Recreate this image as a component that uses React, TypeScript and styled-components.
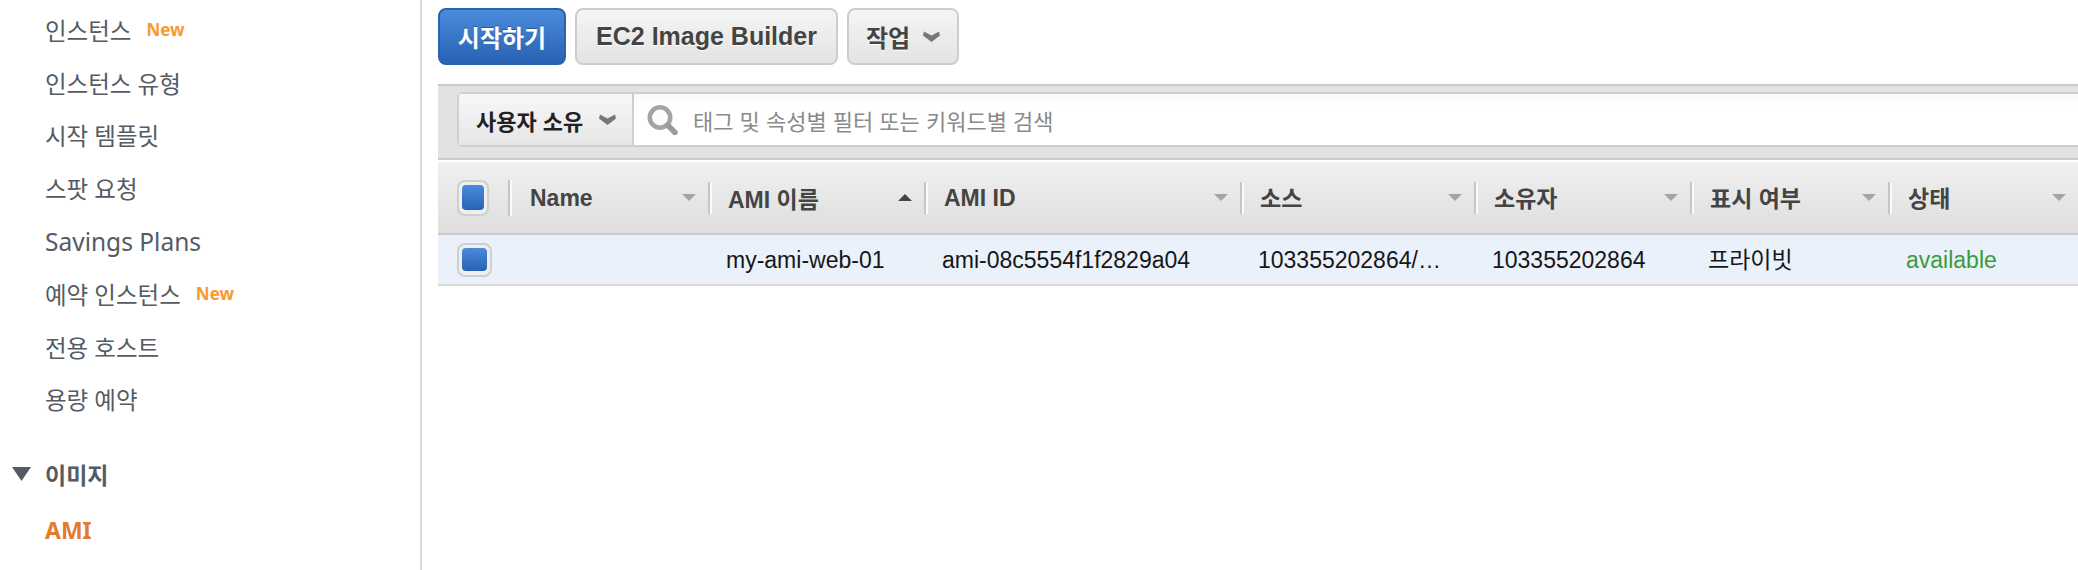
import React from 'react';
import styled, { createGlobalStyle } from 'styled-components';

const COLUMNS = '70px 200px 216px 316px 234px 216px 198px 190px';
const UI_FONT = '"Liberation Sans", "Noto Sans CJK KR", sans-serif';
const NAV_FONT = '"Noto Sans", "Noto Sans CJK KR", sans-serif';

type Script = 'latin' | 'mixed' | 'cjk';

// Noto CJK sits lower in the line than Liberation, nudge each so they share a baseline
const nudge = (s: Script) =>
  s === 'latin' ? 'padding-top: 2px;' : s === 'cjk' ? 'padding-bottom: 2px;' : '';

const GlobalStyle = createGlobalStyle`
  html, body {
    margin: 0;
    padding: 0;
    background: #fff;
  }
`;

const Page = styled.div`
  display: flex;
  width: 2078px;
  height: 570px;
  overflow: hidden;
  font-family: ${UI_FONT};
`;

const Sidebar = styled.nav`
  flex: 0 0 420px;
  padding-top: 3.5px;
  border-right: 2px solid #d5d9dc;
  font-family: ${NAV_FONT};
`;

const NavItem = styled.div<{ $latin?: boolean }>`
  display: flex;
  align-items: center;
  height: 52.8px;
  padding-left: 45px;
  font-size: ${p => (p.$latin ? 24.5 : 23.5)}px;
  color: #545b64;
`;

const NewTag = styled.span`
  margin-left: 15px;
  font-size: 17px;
  font-weight: 700;
  color: #f7992f;
`;

const SectionTitle = styled.div`
  display: flex;
  align-items: center;
  height: 52px;
  margin-top: 22.5px;
  padding-left: 12px;
  font-size: 23px;
  font-weight: 700;
  color: #545b64;
  svg {
    margin-right: 14px;
  }
`;

const ActiveItem = styled.div`
  display: flex;
  align-items: center;
  height: 52px;
  margin-top: 4px;
  padding-left: 45px;
  font-size: 23px;
  font-weight: 700;
  color: #e27b2f;
`;

const Main = styled.main`
  flex: 1;
  min-width: 0;
  padding-left: 16px;
`;

const Toolbar = styled.div`
  display: flex;
  gap: 9px;
  padding-top: 8px;
  height: 57px;
`;

const Button = styled.button<{ $primary?: boolean; $latin?: boolean; $width: number }>`
  display: flex;
  align-items: center;
  justify-content: center;
  gap: 13px;
  box-sizing: border-box;
  width: ${p => p.$width}px;
  height: 57px;
  padding: 0;
  border-radius: 8px;
  border: 2px solid ${p => (p.$primary ? '#2c62ad' : '#cdcdcd')};
  background: ${p =>
    p.$primary
      ? 'linear-gradient(#4b8bdb, #2862b5)'
      : 'linear-gradient(#f5f5f5, #e3e3e3)'};
  color: ${p => (p.$primary ? '#fff' : '#444')};
  font-family: ${UI_FONT};
  font-size: ${p => (p.$latin ? 25 : 24)}px;
  font-weight: 700;
  text-shadow: ${p => (p.$primary ? '0 -1px 0 rgba(0,0,0,.3)' : '0 1px 0 #fff')};
`;

const FilterPanel = styled.div`
  margin-top: 19px;
  box-sizing: border-box;
  height: 76px;
  padding: 6px 0 0 19px;
  background: #e2e2e2;
  border-top: 2px solid #cbcbcb;
  border-bottom: 2px solid #cbcbcb;
`;

const FilterControl = styled.div`
  display: flex;
  box-sizing: border-box;
  height: 55px;
  border: 2px solid #cfcfcf;
  border-right: 0;
  border-radius: 6px 0 0 6px;
  background: linear-gradient(#f9f9f9 0, #fff 12px);
`;

const OwnerSelect = styled.div`
  display: flex;
  align-items: center;
  box-sizing: border-box;
  flex: 0 0 175px;
  padding-left: 17px;
  gap: 16px;
  border-right: 2px solid #cfcfcf;
  background: linear-gradient(#f7f7f7, #e6e6e6);
  font-size: 22px;
  font-weight: 700;
  color: #222;
`;

const SearchBox = styled.div`
  display: flex;
  align-items: center;
  padding-left: 13px;
  gap: 15px;
  font-size: 22px;
  color: #8a8a8a;
`;

const Row = styled.div`
  display: grid;
  grid-template-columns: ${COLUMNS};
`;

const HeaderRow = styled(Row)`
  box-sizing: border-box;
  margin-top: 2px;
  height: 73px;
  background: linear-gradient(#f0f0f0, #dedede);
  border-bottom: 2px solid #c9c9c9;
`;

const BodyRow = styled(Row)`
  box-sizing: border-box;
  height: 51px;
  background: #eaf1fb;
  border-bottom: 2px solid #dcdcdc;
`;

const CheckCell = styled.div`
  display: flex;
  align-items: center;
  padding-left: 19px;
`;

const Check = styled.span<{ $w: number; $h: number }>`
  display: flex;
  align-items: center;
  justify-content: center;
  box-sizing: border-box;
  width: ${p => p.$w}px;
  height: ${p => p.$h}px;
  border: 2px solid #cfcfcf;
  border-radius: 8px;
  background: #efefef;
  &::after {
    content: '';
    width: ${p => p.$w - 10}px;
    height: ${p => p.$h - 11}px;
    border-radius: 4px;
    background: linear-gradient(#4b8bdb, #2762b6);
  }
`;

const HeadCell = styled.div`
  display: flex;
  align-items: center;
  min-width: 0;
  font-size: 23px;
  font-weight: 700;
  color: #444;
`;

const Divider = styled.span<{ $tall?: boolean }>`
  flex: none;
  width: 2px;
  height: ${p => (p.$tall ? 36 : 32)}px;
  background: #c6c6c6;
  border-right: 2px solid #fafafa;
`;

const HeadLabel = styled.span<{ $inset: number; $script: Script }>`
  flex: 1;
  padding-left: ${p => p.$inset}px;
  white-space: nowrap;
  ${p => nudge(p.$script)}
`;

const SortArrow = styled.span<{ $up?: boolean }>`
  flex: none;
  width: 0;
  height: 0;
  margin-right: 12px;
  border-left: 7px solid transparent;
  border-right: 7px solid transparent;
  ${p =>
    p.$up
      ? 'border-bottom: 7px solid #444;'
      : 'border-top: 7px solid #a5a5a5;'}
`;

const Cell = styled.div<{ $status?: boolean; $script: Script }>`
  display: flex;
  align-items: center;
  padding-left: 18px;
  font-size: 23px;
  color: ${p => (p.$status ? '#3c9a3c' : '#161616')};
  white-space: nowrap;
  ${p => (p.$script === 'cjk' ? 'padding-bottom: 4px;' : nudge(p.$script))}
`;

const Chevron: React.FC = () => (
  <svg width="17" height="11" viewBox="0 0 17 11" aria-hidden="true">
    <path d="M1 .5 L8.5 4.5 L16 .5 L17 4.5 L8.5 11 L0 4.5 Z" fill="#787878" />
  </svg>
);

const SearchIcon: React.FC = () => (
  <svg width="31" height="30" viewBox="0 0 31 30" aria-hidden="true">
    <circle cx="13" cy="12.5" r="10.2" fill="#fcfcfc" stroke="#a4a4a4" strokeWidth="4.6" />
    <path d="M21 20.5 L28 27.5" stroke="#9a9a9a" strokeWidth="5.5" strokeLinecap="round" />
  </svg>
);

const CollapseIcon: React.FC = () => (
  <svg width="19" height="14" viewBox="0 0 19 14" aria-hidden="true">
    <path d="M0 0 H19 L9.5 14 Z" fill="#545b64" />
  </svg>
);

const navItems: { label: string; isNew?: boolean; latin?: boolean }[] = [
  { label: '인스턴스', isNew: true },
  { label: '인스턴스 유형' },
  { label: '시작 템플릿' },
  { label: '스팟 요청' },
  { label: 'Savings Plans', latin: true },
  { label: '예약 인스턴스', isNew: true },
  { label: '전용 호스트' },
  { label: '용량 예약' },
];

const headers: { label: string; script: Script }[] = [
  { label: 'Name', script: 'latin' },
  { label: 'AMI 이름', script: 'mixed' },
  { label: 'AMI ID', script: 'latin' },
  { label: '소스', script: 'cjk' },
  { label: '소유자', script: 'cjk' },
  { label: '표시 여부', script: 'cjk' },
  { label: '상태', script: 'cjk' },
];

const cells: { text: string; script: Script }[] = [
  { text: '', script: 'latin' },
  { text: 'my-ami-web-01', script: 'latin' },
  { text: 'ami-08c5554f1f2829a04', script: 'latin' },
  { text: '103355202864/…', script: 'latin' },
  { text: '103355202864', script: 'latin' },
  { text: '프라이빗', script: 'cjk' },
];

const App: React.FC = () => (
  <Page>
    <GlobalStyle />
    <Sidebar>
      {navItems.map(item => (
        <NavItem key={item.label} $latin={item.latin}>
          {item.label}
          {item.isNew && <NewTag>New</NewTag>}
        </NavItem>
      ))}
      <SectionTitle>
        <CollapseIcon />
        이미지
      </SectionTitle>
      <ActiveItem>AMI</ActiveItem>
    </Sidebar>
    <Main>
      <Toolbar>
        <Button $primary $width={128}>시작하기</Button>
        <Button $latin $width={263}>EC2 Image Builder</Button>
        <Button $width={112}>작업<Chevron /></Button>
      </Toolbar>
      <FilterPanel>
        <FilterControl>
          <OwnerSelect>
            사용자 소유 <Chevron />
          </OwnerSelect>
          <SearchBox>
            <SearchIcon />
            태그 및 속성별 필터 또는 키워드별 검색
          </SearchBox>
        </FilterControl>
      </FilterPanel>
      <HeaderRow>
        <CheckCell>
          <Check $w={32} $h={36} />
        </CheckCell>
        {headers.map((h, i) => (
          <HeadCell key={h.label}>
            <Divider $tall={i === 0} />
            <HeadLabel $inset={i === 0 ? 18 : 16} $script={h.script}>{h.label}</HeadLabel>
            <SortArrow $up={i === 1} />
          </HeadCell>
        ))}
      </HeaderRow>
      <BodyRow>
        <CheckCell>
          <Check $w={35} $h={34} />
        </CheckCell>
        {cells.map((c, i) => (
          <Cell key={i} $script={c.script}>{c.text}</Cell>
        ))}
        <Cell $status $script="latin">available</Cell>
      </BodyRow>
    </Main>
  </Page>
);

export default App;
